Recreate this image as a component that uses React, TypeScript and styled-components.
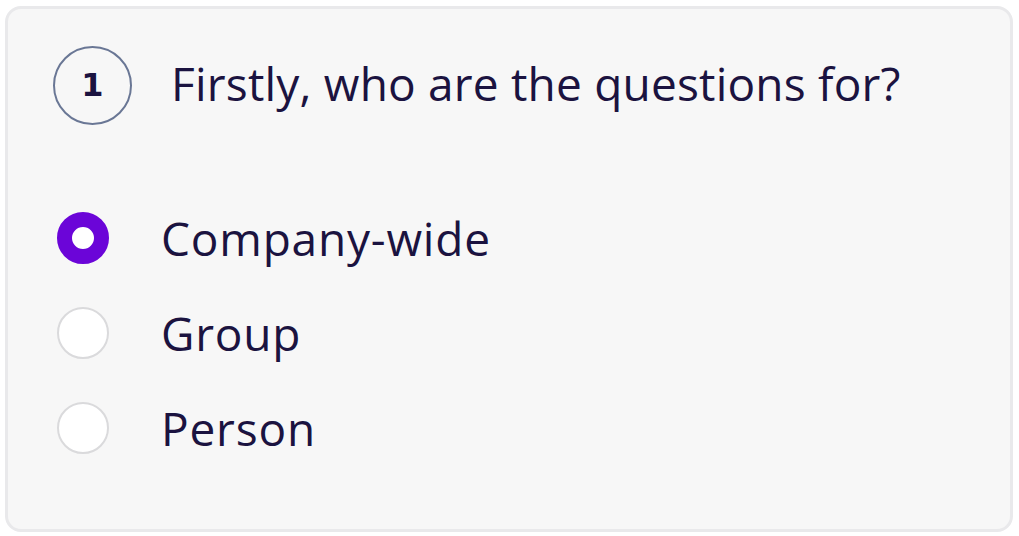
import React, { useState } from "react";
import styled, { createGlobalStyle } from "styled-components";

const Global = createGlobalStyle`
  html, body { margin: 0; padding: 0; background: #ffffff; }
  body { font-family: "Open Sans", "Noto Sans", sans-serif; }
`;

const Page = styled.div`
  padding: 6px 6px 4px 5px;
`;

const Card = styled.div`
  box-sizing: border-box;
  width: 1008px;
  height: 526px;
  border: 3px solid #e9e9eb;
  border-radius: 16px;
  background: #f7f7f7;
  padding: 37px 0 0 45px;
`;

const Header = styled.div`
  display: flex;
  align-items: center;
  gap: 39px;
`;

const StepBadge = styled.div`
  box-sizing: border-box;
  width: 79px;
  height: 79px;
  border-radius: 50%;
  border: 2.5px solid #6a7795;
  display: flex;
  align-items: center;
  justify-content: center;
  font-family: "DejaVu Sans", sans-serif;
  font-weight: 700;
  font-size: 32px;
  line-height: 1;
  padding-bottom: 1px;
  color: #1b1340;
`;

const Title = styled.h1`
  margin: 0 0 6px;
  font-family: "Open Sans", sans-serif;
  font-weight: 400;
  font-size: 46px;
  line-height: 56px;
  color: #1b1340;
  letter-spacing: 0.2px;
`;

const Options = styled.div`
  display: flex;
  flex-direction: column;
  gap: 43px;
  margin-top: 87px;
  padding-left: 4px;
`;

const Option = styled.label`
  display: flex;
  align-items: center;
  gap: 52px;
  cursor: pointer;
`;

const Radio = styled.span<{ $checked: boolean }>`
  box-sizing: border-box;
  width: 52px;
  height: 52px;
  border-radius: 50%;
  flex: none;
  background: #ffffff;
  border: ${(p) => (p.$checked ? "15.5px solid #6b05d8" : "2.5px solid #dadadc")};
`;

const OptionText = styled.span`
  font-family: "Open Sans", sans-serif;
  font-size: 46px;
  line-height: 52px;
  font-weight: 400;
  color: #1b1340;
  letter-spacing: 0.8px;
`;

const options = ["Company-wide", "Group", "Person"];

export default function App() {
  const [value, setValue] = useState("Company-wide");
  return (
    <Page>
      <Global />
      <Card>
        <Header>
          <StepBadge>1</StepBadge>
          <Title>Firstly, who are the questions for?</Title>
        </Header>
        <Options>
          {options.map((o) => (
            <Option key={o} onClick={() => setValue(o)}>
              <Radio $checked={value === o} />
              <OptionText>{o}</OptionText>
            </Option>
          ))}
        </Options>
      </Card>
    </Page>
  );
}
